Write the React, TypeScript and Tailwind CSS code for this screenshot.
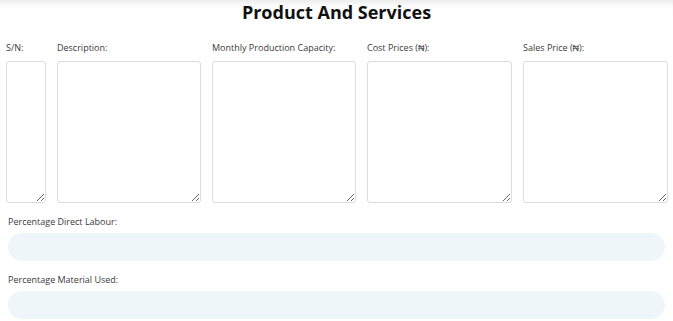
const columns = [
  { key: "sn", label: "S/N:", width: "w-[40px]" },
  { key: "description", label: "Description:", width: "w-[144px]" },
  { key: "capacity", label: "Monthly Production Capacity:", width: "w-[144px]" },
  { key: "cost", label: "Cost Prices (₦):", width: "w-[145px]" },
  { key: "sales", label: "Sales Price (₦):", width: "w-[145px]" },
] as const;

const percentages = [
  { key: "labour", label: "Percentage Direct Labour:" },
  { key: "material", label: "Percentage Material Used:" },
] as const;

export default function App() {
  return (
    <div className="min-h-[321px] bg-white font-['Open_Sans',sans-serif] text-[#3a3a3a] shadow-[inset_0_8px_7px_-5px_rgba(0,0,0,0.09)]">
      <h2 className="text-center text-[18px] font-bold leading-[25px] text-[#111]">
        Product And Services
      </h2>

      <div className="mt-[16px] flex gap-[11px] pl-[6px]">
        {columns.map(({ key, label, width }) => (
          <div key={key} className={`flex flex-col ${width}`}>
            <label className="whitespace-nowrap text-[9px] leading-[14px]">{label}</label>
            <textarea className="mt-[6px] h-[142px] w-full rounded-[3px] border border-[#dcdcdc] bg-white" />
          </div>
        ))}
      </div>

      <div className="mt-[12px] flex flex-col gap-[12px] px-[8px]">
        {percentages.map(({ key, label }) => (
          <div key={key} className="flex flex-col">
            <label className="text-[9px] leading-[14px]">{label}</label>
            <input type="text" className="mt-[4px] h-[28px] w-full rounded-full bg-[#eff6fa] outline-none" />
          </div>
        ))}
      </div>
    </div>
  );
}
